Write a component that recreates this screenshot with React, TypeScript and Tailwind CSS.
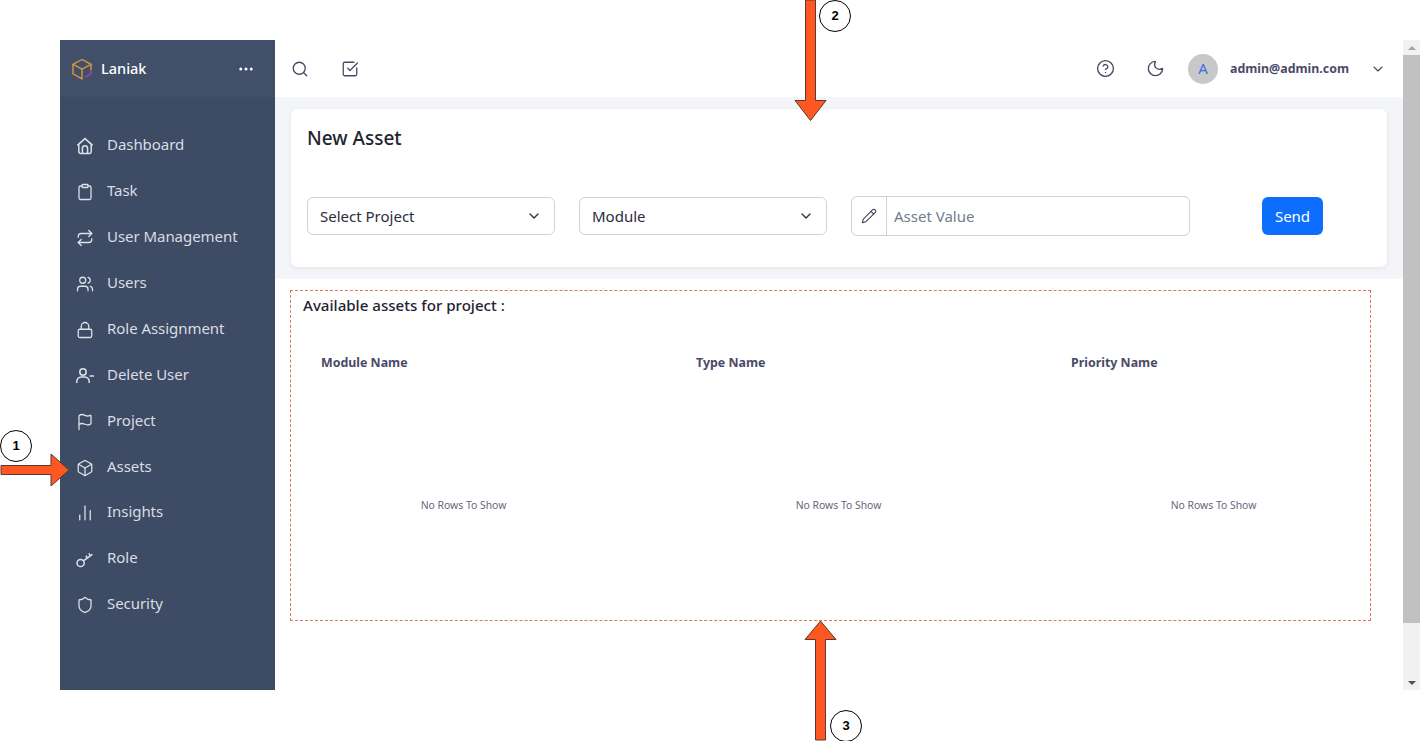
import {
	ChartNoAxesColumn,
	ChevronDown,
	CircleHelp,
	Clipboard,
	Ellipsis,
	Flag,
	Box,
	Lock,
	Moon,
	Pencil,
	Repeat,
	Search,
	Shield,
	SquareCheckBig,
	Users,
} from "lucide-react";
import type { ReactNode } from "react";

const font = "font-['Noto_Sans','Open_Sans',sans-serif]";

function HomeIcon() {
	return (
		<svg viewBox="0 0 18 18" fill="none" stroke="currentColor" strokeWidth="1.5" className="size-[18px]">
			<path d="M1.4 8.4 9 1.6l7.6 6.8M2.8 7.2v7.6a1.6 1.6 0 0 0 1.6 1.6h9.2a1.6 1.6 0 0 0 1.6-1.6V7.2" />
			<path d="M6.4 16.4v-5a2.6 2.6 0 0 1 5.2 0v5" />
		</svg>
	);
}

function UserMinusIcon() {
	return (
		<svg viewBox="0 0 18 18" fill="none" stroke="currentColor" strokeWidth="1.5" className="size-[18px]">
			<circle cx="7" cy="5" r="3.2" />
			<path d="M0.8 16v-1.5A4.5 4.5 0 0 1 5.3 10h3.4a4.5 4.5 0 0 1 4.5 4.5V16M13.6 9H18" />
		</svg>
	);
}

function KeyIcon() {
	return (
		<svg viewBox="0 0 18 18" fill="none" stroke="currentColor" strokeWidth="1.5" className="size-[18px]">
			<circle cx="4.6" cy="13" r="3.6" />
			<path d="m7.4 10.8 9-6.4M11.4 8l-1.6-2.2M14.4 5.8l-1.6-2.4" />
		</svg>
	);
}

const navItems: { label: string; icon: ReactNode }[] = [
	{ label: "Dashboard", icon: <HomeIcon /> },
	{ label: "Task", icon: <Clipboard size={18} strokeWidth={1.7} /> },
	{ label: "User Management", icon: <Repeat size={18} strokeWidth={1.7} /> },
	{ label: "Users", icon: <Users size={18} strokeWidth={1.7} /> },
	{ label: "Role Assignment", icon: <Lock size={18} strokeWidth={1.7} /> },
	{ label: "Delete User", icon: <UserMinusIcon /> },
	{ label: "Project", icon: <Flag size={18} strokeWidth={1.7} /> },
	{ label: "Assets", icon: <Box size={18} strokeWidth={1.7} /> },
	{ label: "Insights", icon: <ChartNoAxesColumn size={18} strokeWidth={1.7} /> },
	{ label: "Role", icon: <KeyIcon /> },
	{ label: "Security", icon: <Shield size={18} strokeWidth={1.7} /> },
];

const columns = ["Module Name", "Type Name", "Priority Name"];

function Logo() {
	return (
		<svg viewBox="0 0 22 22" fill="none" strokeWidth="1.4" className="size-[22px]">
			<path d="M11 1.5 2 6.3l9 4.9 9-4.9z" stroke="#d9963c" />
			<path d="M2 6.3v9.6l9 4.9v-9.6" stroke="#d9963c" />
			<path d="M20 6.3v6" stroke="#d9963c" />
			<path d="M20 12.5v3.4l-6 3.2" stroke="#b23dac" />
		</svg>
	);
}

function SelectBox({ label }: { label: string }) {
	return (
		<div className="flex h-[38px] w-[248px] items-center justify-between rounded-md border border-[#cfd1d6] bg-white pl-3 pr-3 text-[15px] text-[#2c2c3a]">
			<span>{label}</span>
			<ChevronDown size={16} strokeWidth={2} className="text-[#333]" />
		</div>
	);
}

function ArrowRight() {
	return (
		<svg width="72" height="36" viewBox="0 0 72 36" className="absolute left-0 top-[452px]">
			<path d="M1 13.5H51V2L69 18 51 34V22.5H1z" fill="#ff5722" stroke="#5a3a30" strokeWidth="1" />
		</svg>
	);
}

function ArrowDown() {
	return (
		<svg width="34" height="122" viewBox="0 0 34 122" className="absolute left-[794px] top-0">
			<path d="M11.5 0H21.5V100.500H32L16.500 120.500 1 100.500H11.5z" fill="#ff5722" stroke="#5a3a30" strokeWidth="1" />
		</svg>
	);
}

function ArrowUp() {
	return (
		<svg width="34" height="122" viewBox="0 0 34 122" className="absolute left-[803px] top-[620px]">
			<path d="M12.5 120V19.5H2L17.5 1 33 19.5H22.5V120z" fill="#ff5722" stroke="#5a3a30" strokeWidth="1" />
		</svg>
	);
}

function Badge({ n, className }: { n: number; className: string }) {
	return (
		<div
			className={`absolute flex size-[32px] items-center justify-center rounded-full border border-black bg-white font-['Liberation_Sans',sans-serif] text-[13px] font-bold text-black ${className}`}
		>
			{n}
		</div>
	);
}

export default function App() {
	return (
		<div className={`${font} relative h-[741px] w-[1421px] overflow-hidden bg-white pl-[60px] pt-[40px]`}>
			<div className="flex h-[650px] w-[1360px]">
				<aside className="flex w-[215px] flex-col bg-[#3d4b64]">
					<div className="flex h-[57px] items-center bg-[#414f69] pl-[11px] pr-[20px]">
						<Logo />
						<span className="ml-2 text-[14.5px] font-medium text-white">Laniak</span>
						<Ellipsis size={18} className="ml-auto text-white" />
					</div>
					<nav className="flex flex-col pt-6">
						{navItems.map((item, i) => (
							<div key={item.label} className="flex h-[46px] items-center pl-4 text-[15px] tracking-[-0.05px] text-[#dadde3]">
								<span className={`flex w-[31px] shrink-0 text-[#dfe2e7] ${i < 8 ? "translate-y-[2px]" : "translate-y-px"}`}>
									{item.icon}
								</span>
								<span className={i < 8 ? "" : "-translate-y-px"}>{item.label}</span>
							</div>
						))}
					</nav>
				</aside>

				<main className="flex w-[1128px] flex-col">
					<header className="flex h-[57px] items-center pl-[16px] pr-[17px] text-[#474764]">
						<Search size={18} strokeWidth={1.7} />
						<SquareCheckBig size={18} strokeWidth={1.7} className="ml-[32px]" />
						<CircleHelp size={19} strokeWidth={1.7} className="ml-auto" />
						<Moon size={19} strokeWidth={1.7} className="ml-[31px]" />
						<div className="ml-[23px] flex size-[30px] items-center justify-center rounded-full bg-[#c8c8c8] text-[15px] text-[#3c6fe0]">
							A
						</div>
						<span className="ml-3 pt-0.5 text-[12.4px] font-bold text-[#4a4a68]">admin@admin.com</span>
						<ChevronDown size={16} strokeWidth={1.7} className="ml-[21px]" />
					</header>

					<section className="bg-[#f4f5f8] px-4 py-3">
						<div className="h-[158px] w-[1096px] rounded-md bg-white px-4 pt-4 shadow-[0_1px_4px_rgba(0,0,0,0.08)]">
							<h2 className="text-[19px] font-medium leading-[26px] text-[#1f2430]">New Asset</h2>
							<div className="mt-[45px] flex items-center">
								<SelectBox label="Select Project" />
								<div className="ml-6">
									<SelectBox label="Module" />
								</div>
								<div className="ml-6 flex h-10 w-[339px] items-center rounded-md border border-[#cfd1d6] text-[15px]">
									<span className="flex h-full w-[35px] items-center justify-center border-r border-[#cfd1d6] text-[#474764]">
										<Pencil size={16} strokeWidth={1.7} />
									</span>
									<span className="ml-[7px] text-[#737b8c]">Asset Value</span>
								</div>
								<button
									type="button"
									className="ml-[72px] h-[38px] w-[61px] rounded-md bg-[#0d6efd] text-[15px] text-white"
								>
									Send
								</button>
							</div>
						</div>
					</section>

					<section className="pl-[15px] pt-[11px]">
						<div className="h-[331px] w-[1081px] border border-dashed border-[#e0745a] pl-3 pt-1">
							<h3 className="text-[15.1px] font-medium leading-5 text-[#1f2430]">Available assets for project :</h3>
							<div className="mt-[38px] grid grid-cols-[375px_375px_1fr] pl-[18px]">
								{columns.map((col) => (
									<div key={col}>
										<div className="text-[12.4px] font-bold leading-5 text-[#4a4a68]">{col}</div>
										<div className="mt-[124px] w-[285px] text-center text-[10.4px] leading-4 text-[#66667a]">
											No Rows To Show
										</div>
									</div>
								))}
							</div>
						</div>
					</section>
				</main>

				<div className="flex w-[17px] flex-col items-center bg-[#f1f1f1]">
					<div className="flex h-[15px] items-center text-[#a3a3a3]">
						<div className="size-0 border-x-[4px] border-b-[4px] border-x-transparent border-b-[#a3a3a3]" />
					</div>
					<div className="h-[568px] w-full bg-[#c1c1c1]" />
					<div className="mt-auto flex h-[15px] items-center">
						<div className="size-0 border-x-[4px] border-t-[4px] border-x-transparent border-t-[#505050]" />
					</div>
				</div>
			</div>

			<ArrowRight />
			<ArrowDown />
			<ArrowUp />
			<Badge n={1} className="left-0 top-[430px]" />
			<Badge n={2} className="left-[819px] top-0" />
			<Badge n={3} className="left-[830px] top-[710px]" />
		</div>
	);
}
